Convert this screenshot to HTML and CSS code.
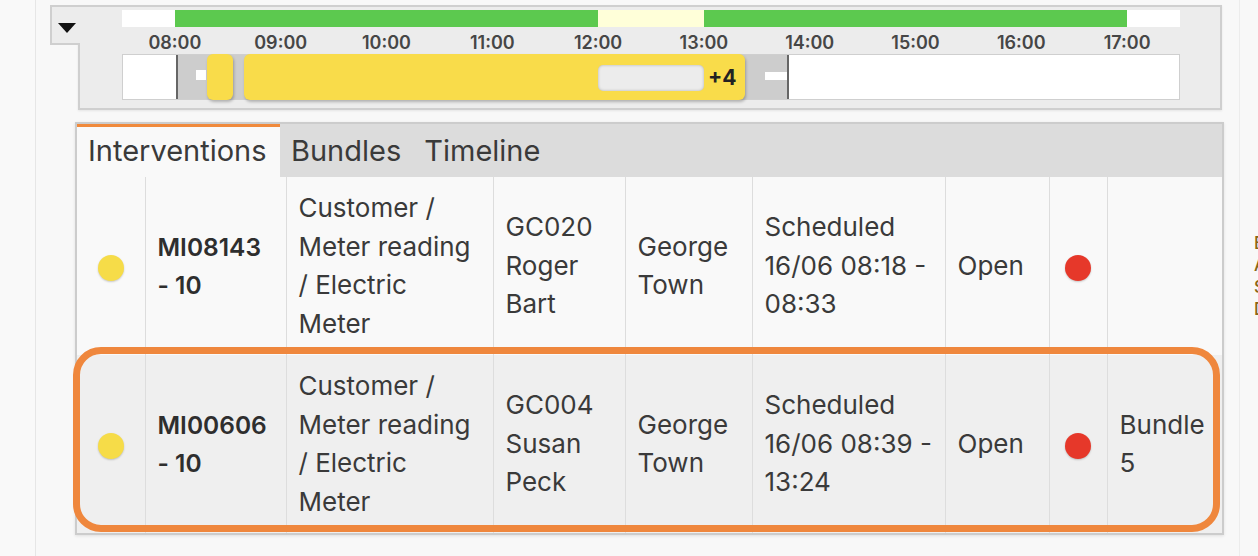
FILE: index.html
```html
<!DOCTYPE html>
<html lang="en">
<head>
    <meta charset="UTF-8">
    <meta name="viewport" content="width=device-width, initial-scale=1.0">
    <title>Planning</title>
    <link rel="stylesheet" href="styles.css">
</head>
<body>
    <div class="layout">
        <div class="sidebar"></div>

        <main class="content">
            <div class="timeline-wrap">
                <button class="toggle" type="button"><span class="caret"></span></button>
                <div class="timeline">
                    <div class="daybar">
                        <div class="free" style="width: 5%"></div>
                        <div class="work" style="width: 40%"></div>
                        <div class="break" style="width: 10%"></div>
                        <div class="work" style="width: 40%"></div>
                        <div class="free" style="width: 5%"></div>
                    </div>
                    <div class="hours">
                        <span style="left: 5%">08:00</span>
                        <span style="left: 15%">09:00</span>
                        <span style="left: 25%">10:00</span>
                        <span style="left: 35%">11:00</span>
                        <span style="left: 45%">12:00</span>
                        <span style="left: 55%">13:00</span>
                        <span style="left: 65%">14:00</span>
                        <span style="left: 75%">15:00</span>
                        <span style="left: 85%">16:00</span>
                        <span style="left: 95%">17:00</span>
                    </div>
                    <div class="track">
                        <div class="busy" style="left: 5%; width: 58.1%"></div>
                        <div class="mark" style="left: 6.9%"></div>
                        <div class="mark wide" style="left: 60.8%"></div>
                        <div class="job" style="left: 7.95%; width: 26px"></div>
                        <div class="job" style="left: 11.46%; width: 501px">
                            <div class="lunch"></div>
                            <b class="more">+4</b>
                        </div>
                    </div>
                </div>
            </div>

            <div class="panel">
                <div class="tabs">
                    <div class="tab active">Interventions</div>
                    <div class="tab">Bundles</div>
                    <div class="tab">Timeline</div>
                </div>
                <table class="grid">
                    <colgroup>
                        <col style="width: 68px">
                        <col style="width: 141px">
                        <col style="width: 207px">
                        <col style="width: 132px">
                        <col style="width: 127px">
                        <col style="width: 193px">
                        <col style="width: 104px">
                        <col style="width: 58px">
                        <col style="width: 115px">
                    </colgroup>
                    <tr>
                        <td class="center"><span class="dot yellow"></span></td>
                        <td class="id">MI08143 - 10</td>
                        <td>Customer / Meter reading / Electric Meter</td>
                        <td>GC020 Roger Bart</td>
                        <td>George Town</td>
                        <td>Scheduled 16/06 08:18 - 08:33</td>
                        <td>Open</td>
                        <td class="center"><span class="dot red"></span></td>
                        <td></td>
                    </tr>
                    <tr class="selected">
                        <td class="center"><span class="dot yellow"></span></td>
                        <td class="id">MI00606 - 10</td>
                        <td>Customer / Meter reading / Electric Meter</td>
                        <td>GC004 Susan Peck</td>
                        <td>George Town</td>
                        <td>Scheduled 16/06 08:39 - 13:24</td>
                        <td>Open</td>
                        <td class="center"><span class="dot red"></span></td>
                        <td>Bundle 5</td>
                    </tr>
                </table>
                <div class="highlight"></div>
            </div>
        </main>

        <aside class="details">
            <div>Bundle</div>
            <div>Area</div>
            <div>Status</div>
            <div>Duration</div>
        </aside>
    </div>
</body>
</html>
```
FILE: styles.css
```css
body {
    margin: 0;
    padding: 0;
    font-family: Inter, "Noto Sans", sans-serif;
    color: #333;
    background-color: #f8f8f8;
    overflow: hidden;
}

.layout {
    display: flex;
    height: 100vh;
}

.sidebar {
    width: 35px;
    flex-shrink: 0;
    background-color: #f9f9f9;
    border-right: 1px solid #e6e6e6;
}

.content {
    width: 1203px;
    flex-shrink: 0;
    padding-top: 5px;
}

.details {
    flex: 1;
    border-left: 1px solid #ececec;
    padding: 232px 0 0 14px;
    overflow: hidden;
    white-space: nowrap;
    font-size: 17px;
    font-weight: 500;
    line-height: 22px;
    color: #8a6516;
}

/* timeline */

.timeline-wrap {
    display: flex;
    align-items: flex-start;
    margin-left: 14px;
    width: 1172px;
}

.toggle {
    position: relative;
    z-index: 1;
    display: flex;
    justify-content: center;
    align-items: center;
    box-sizing: border-box;
    width: 30px;
    height: 40px;
    margin: 0 -2px 0 0;
    padding: 5px 0 0 2px;
    background-color: #ececec;
    border: 2px solid #cfcfcf;
    border-right: none;
    cursor: pointer;
}

.caret {
    width: 0;
    height: 0;
    border-left: 9px solid transparent;
    border-right: 9px solid transparent;
    border-top: 10px solid #111;
}

.timeline {
    flex: 1;
    box-sizing: border-box;
    height: 105px;
    padding: 3px 40px 0 42px;
    background-color: #ececec;
    border: 2px solid #cfcfcf;
    box-shadow: 0 1px 2px rgba(0,0,0,0.08);
}

.daybar {
    display: flex;
    height: 17px;
}

.daybar .free {
    background-color: #fff;
}

.daybar .work {
    background-color: #5cc94f;
}

.daybar .break {
    background-color: #ffffd9;
}

.hours {
    position: relative;
    height: 27px;
}

.hours span {
    position: absolute;
    top: 1px;
    transform: translateX(-50%);
    font-size: 18px;
    font-weight: 600;
    line-height: 30px;
    color: #464646;
}

.track {
    position: relative;
    box-sizing: border-box;
    height: 46px;
    background-color: #fff;
    border: 1px solid #cfcfcf;
}

.busy {
    position: absolute;
    top: 0;
    bottom: 0;
    box-sizing: border-box;
    background-color: #cdcdcd;
    border-left: 2px solid #666;
    border-right: 2px solid #666;
}

.mark {
    position: absolute;
    top: 15px;
    width: 10px;
    height: 10px;
    background-color: #fff;
}

.mark.wide {
    top: 17px;
    width: 22px;
    height: 8px;
}

.job {
    position: absolute;
    top: -1px;
    bottom: -1px;
    box-sizing: border-box;
    display: flex;
    justify-content: flex-end;
    align-items: center;
    gap: 4px;
    padding-right: 7px;
    background-color: #f9dc4a;
    border-radius: 6px;
    box-shadow: 1px 2px 3px rgba(0,0,0,0.25);
}

.lunch {
    width: 106px;
    height: 26px;
    margin-top: 2px;
    background-color: #ececec;
    border-radius: 5px;
    box-shadow: inset 0 0 3px rgba(0,0,0,0.25);
}

.more {
    width: 30px;
    font-size: 21px;
    font-weight: 700;
    color: #222;
}

/* tabs and table */

.panel {
    position: relative;
    width: 1149px;
    box-sizing: border-box;
    margin: 12px 0 0 39px;
    background-color: #f9f9f9;
    border: 2px solid #cccccc;
    box-shadow: 0 1px 3px rgba(0,0,0,0.1);
}

.tabs {
    display: flex;
    height: 53px;
    background-color: #dcdcdc;
}

.tab {
    box-sizing: border-box;
    padding: 0 12px 0 11px;
    font-size: 29px;
    line-height: 53px;
    color: #3a3a3a;
}

.tab.active {
    min-width: 203px;
    background-color: #f9f9f9;
    border-top: 3px solid #f08a3c;
    line-height: 47px;
}

.grid {
    width: 1145px;
    table-layout: fixed;
    border-collapse: collapse;
}

.grid td {
    padding: 12px;
    vertical-align: middle;
    border-left: 1px solid #dddddd;
    font-size: 26px;
    line-height: 38.5px;
    color: #3a3a3a;
}

.grid td:first-child {
    border-left: none;
}

.grid tr.selected td {
    background-color: #efefef;
}

.grid td.id {
    font-size: 24.5px;
    font-weight: 600;
    color: #2e2e2e;
}

.grid td.center {
    text-align: center;
    padding: 0;
}

.dot {
    display: inline-block;
    width: 26px;
    height: 26px;
    border-radius: 50%;
    vertical-align: middle;
    box-shadow: 0 1px 2px rgba(0,0,0,0.2);
}

.dot.yellow {
    background-color: #f6dc48;
}

.dot.red {
    background-color: #e6382a;
}

.highlight {
    position: absolute;
    top: 223px;
    left: -4px;
    right: 2px;
    bottom: 1px;
    border: 7px solid #ef873d;
    border-radius: 28px;
    pointer-events: none;
}
```
